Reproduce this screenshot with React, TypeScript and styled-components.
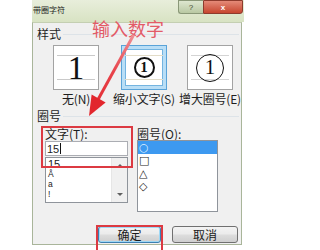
import React from "react";
import styled, { createGlobalStyle, css } from "styled-components";

const Global = createGlobalStyle`
  html, body { margin: 0; padding: 0; background: #ffffff; }
  body {
    width: 304px; height: 250px; overflow: hidden;
    font-family: "Noto Sans CJK SC", "Noto Sans", sans-serif;
  }
`;

const Stage = styled.div`
  position: relative;
  width: 304px;
  height: 250px;
  overflow: hidden;
  background: #ffffff;
`;

const Window = styled.div`
  margin-left: 32px;
  width: 212px;
  display: flex;
  flex-direction: column;
`;

const TitleBar = styled.div`
  height: 22px;
  background: linear-gradient(#e8eedb, #d8e3c3);
  display: flex;
  align-items: flex-start;
  justify-content: space-between;
  padding-left: 1px;
`;

const Title = styled.span`
  font-size: 8px;
  line-height: 8px;
  margin-top: 6px;
  color: #1d1d1d;
`;

const Caps = styled.div`
  display: flex;
  margin-right: 1px;
`;

const CapButton = styled.div<{ $close?: boolean }>`
  height: 14px;
  width: ${(p) => (p.$close ? 40 : 25)}px;
  box-sizing: border-box;
  display: flex;
  align-items: flex-end;
  justify-content: center;
  font-family: "Liberation Sans", sans-serif;
  font-size: 8px;
  line-height: 11px;
  ${(p) =>
    p.$close
      ? css`
          background: linear-gradient(#e48a78, #c7462f);
          border: 1px solid #8d3b2d;
          border-radius: 0 0 3px 0;
          color: #ffffff;
          font-weight: bold;
        `
      : css`
          background: linear-gradient(#dde6cf, #b9c8a3);
          border: 1px solid #8a9878;
          border-right: none;
          border-radius: 0 0 0 3px;
          color: #3c4a30;
        `}
`;

const Body = styled.div`
  height: 223px;
  box-sizing: border-box;
  margin-right: 2px;
  background: #f0f0f0;
  border: 1px solid #a9b59a;
  border-top-color: #c4cfb2;
  padding: 4px 0 0 4px;
  display: flex;
  flex-direction: column;
  font-size: 12px;
  color: #1e1e1e;
`;

const SectionHeader = styled.div<{ $top: number }>`
  display: flex;
  align-items: center;
  gap: 2px;
  height: 14px;
  line-height: 14px;
  margin-top: ${(p) => p.$top}px;
  margin-right: 2px;
  &::after {
    content: "";
    flex: 1;
    height: 1px;
    background: #dde3e8;
  }
`;

const StyleRow = styled.div`
  display: grid;
  grid-template-columns: 68px 68px 64px;
  margin-left: 5px;
  margin-top: 4px;
`;

const StyleCell = styled.div`
  display: flex;
  flex-direction: column;
  align-items: center;
`;

const StyleBox = styled.div<{ $selected?: boolean }>`
  width: 46px;
  height: 45px;
  box-sizing: border-box;
  background: #ffffff;
  display: flex;
  align-items: center;
  justify-content: center;
  border: 1px solid #a3a3a3;
  ${(p) =>
    p.$selected &&
    css`
      border-color: #5aa3d8;
      box-shadow: inset 0 0 0 3px #b9def6, inset 0 0 0 4px #74b4e0;
    `}
`;

const GuideBand = styled.div<{ $tone?: string }>`
  width: 38px;
  height: 25px;
  box-sizing: border-box;
  border-top: 1px solid ${(p) => p.$tone || "#c9c9c9"};
  border-bottom: 1px solid ${(p) => p.$tone || "#c9c9c9"};
  display: flex;
  align-items: center;
  justify-content: center;
  overflow: visible;
`;

const PlainOne = styled.span`
  font-family: "Liberation Serif", serif;
  font-size: 33px;
  line-height: 1;
  color: #111;
  margin-top: 1px;
`;

const Circled = styled.span<{ $size: number; $stroke: number; $font: number; $bold?: boolean }>`
  width: ${(p) => p.$size}px;
  height: ${(p) => p.$size}px;
  flex: none;
  box-sizing: border-box;
  border: ${(p) => p.$stroke}px solid #111;
  border-radius: 50%;
  display: flex;
  align-items: center;
  justify-content: center;
  font-family: "Liberation Serif", serif;
  font-size: ${(p) => p.$font}px;
  font-weight: ${(p) => (p.$bold ? 700 : 400)};
  line-height: 1;
  color: #111;
`;

const StyleLabel = styled.div`
  margin-top: 2px;
  line-height: 14px;
  white-space: nowrap;
  letter-spacing: -0.2px;
`;

const FieldsRow = styled.div`
  display: flex;
  gap: 9px;
  margin-top: 4px;
  margin-left: 8px;
`;

const Column = styled.div<{ $width: number; $marked?: boolean }>`
  width: ${(p) => p.$width}px;
  display: flex;
  flex-direction: column;
  position: relative;
  ${(p) =>
    p.$marked &&
    css`
      &::after {
        content: "";
        position: absolute;
        left: -4px;
        top: -1px;
        width: 92px;
        height: 42px;
        box-sizing: border-box;
        border: 2px solid #dc3a42;
        pointer-events: none;
      }
    `}
`;

const FieldLabel = styled.div`
  height: 13px;
  line-height: 13px;
  white-space: nowrap;
`;

const TextBox = styled.div`
  height: 15px;
  margin-top: 1px;
  box-sizing: border-box;
  background: #ffffff;
  border: 1px solid #abadb3;
  display: flex;
  align-items: center;
  padding-left: 1px;
  font-family: "Liberation Sans", sans-serif;
  font-size: 11px;
  line-height: 12px;
`;

const Caret = styled.span`
  width: 1px;
  height: 11px;
  background: #111;
  margin-left: 1px;
`;

const ListBox = styled.div<{ $height: number; $top?: number }>`
  height: ${(p) => p.$height}px;
  margin-top: ${(p) => p.$top ?? 0}px;
  box-sizing: border-box;
  background: #ffffff;
  border: 1px solid #8f949b;
  display: flex;
  overflow: hidden;
`;

const ListItems = styled.div`
  flex: 1;
  display: flex;
  flex-direction: column;
`;

const CharItem = styled.div`
  height: 10px;
  line-height: 9px;
  padding-left: 2px;
  font-family: "Liberation Sans", sans-serif;
  font-size: 8.5px;
  color: #1a1a1a;
  &:first-child {
    height: 12px;
    line-height: 12px;
    font-size: 11px;
  }
`;

const Scrollbar = styled.div`
  width: 15px;
  background: #f0f0f0;
  border-left: 1px solid #e6e6e6;
  display: flex;
  flex-direction: column;
  justify-content: space-between;
`;

const ScrollArrow = styled.div<{ $down?: boolean }>`
  height: 15px;
  display: flex;
  align-items: center;
  justify-content: center;
  &::before {
    content: "";
    width: 0;
    height: 0;
    border-left: 3px solid transparent;
    border-right: 3px solid transparent;
    ${(p) =>
      p.$down
        ? css`border-top: 3px solid #606060;`
        : css`border-bottom: 3px solid #606060;`}
  }
`;

const ShapeItem = styled.div<{ $selected?: boolean }>`
  height: 13px;
  line-height: 13px;
  padding-left: 1px;
  font-family: "DejaVu Sans", sans-serif;
  font-size: 11px;
  color: ${(p) => (p.$selected ? "#dff0ff" : "#1a1a1a")};
  background: ${(p) => (p.$selected ? "#3d99f0" : "transparent")};
`;

const ButtonRow = styled.div`
  display: flex;
  justify-content: flex-end;
  gap: 11px;
  margin-top: 14px;
  padding-right: 3px;
`;

const Marked = styled.div`
  position: relative;
  display: flex;
  &::after {
    content: "";
    position: absolute;
    left: -2px;
    top: -1px;
    width: 67px;
    height: 30px;
    box-sizing: border-box;
    border: 2px solid #dc3a42;
    pointer-events: none;
  }
`;

const PushButton = styled.div<{ $width: number; $default?: boolean }>`
  width: ${(p) => p.$width}px;
  height: 17px;
  box-sizing: border-box;
  border: 1px solid #707070;
  border-radius: 3px;
  background: linear-gradient(#f3f3f3 0%, #ebebeb 48%, #dddddd 52%, #cfcfcf 100%);
  display: flex;
  align-items: center;
  justify-content: center;
  font-size: 12px;
  line-height: 15px;
  color: #1a1a1a;
  ${(p) =>
    p.$default &&
    css`
      border-color: #3c7fb1;
      box-shadow: inset 0 0 0 1px #9fd8f5;
    `}
`;

const Note = styled.div`
  position: absolute;
  left: 92px;
  top: 16px;
  font-size: 18px;
  line-height: 24px;
  color: #e35b67;
  white-space: nowrap;
  pointer-events: none;
`;

const ArrowLayer = styled.svg`
  position: absolute;
  left: 0;
  top: 0;
  pointer-events: none;
`;

const styles = [
  { label: "无(N)", kind: "plain" },
  { label: "缩小文字(S)", kind: "small" },
  { label: "增大圈号(E)", kind: "big" },
];

const chars = ["15", "Å", "a", "!"];
const shapes = ["○", "□", "△", "◇"];

export default function App() {
  return (
    <Stage>
      <Global />
      <Window>
        <TitleBar>
          <Title>带圈字符</Title>
          <Caps>
            <CapButton>?</CapButton>
            <CapButton $close>x</CapButton>
          </Caps>
        </TitleBar>
        <Body>
          <SectionHeader $top={0}>样式</SectionHeader>
          <StyleRow>
            {styles.map((s) => (
              <StyleCell key={s.label}>
                <StyleBox $selected={s.kind === "small"}>
                  {s.kind === "plain" && (
                    <GuideBand>
                      <PlainOne>1</PlainOne>
                    </GuideBand>
                  )}
                  {s.kind === "small" && (
                    <GuideBand $tone="#e2dcc8">
                      <Circled $size={21} $stroke={2} $font={15} $bold>
                        1
                      </Circled>
                    </GuideBand>
                  )}
                  {s.kind === "big" && (
                    <GuideBand $tone="#d4d4d4">
                      <Circled $size={28} $stroke={1.5} $font={21}>
                        1
                      </Circled>
                    </GuideBand>
                  )}
                </StyleBox>
                <StyleLabel>{s.label}</StyleLabel>
              </StyleCell>
            ))}
          </StyleRow>
          <SectionHeader $top={3}>圈号</SectionHeader>
          <FieldsRow>
            <Column $width={83} $marked>
              <FieldLabel>文字(T):</FieldLabel>
              <TextBox>
                15
                <Caret />
              </TextBox>
              <ListBox $height={46} $top={1}>
                <ListItems>
                  {chars.map((c) => (
                    <CharItem key={c}>{c}</CharItem>
                  ))}
                </ListItems>
                <Scrollbar>
                  <ScrollArrow />
                  <ScrollArrow $down />
                </Scrollbar>
              </ListBox>
            </Column>
            <Column $width={81}>
              <FieldLabel>圈号(O):</FieldLabel>
              <ListBox $height={72}>
                <ListItems>
                  {shapes.map((s, i) => (
                    <ShapeItem key={s} $selected={i === 0}>
                      {s}
                    </ShapeItem>
                  ))}
                </ListItems>
              </ListBox>
            </Column>
          </FieldsRow>
          <ButtonRow>
            <Marked>
              <PushButton $width={63} $default>
                确定
              </PushButton>
            </Marked>
            <PushButton $width={66}>取消</PushButton>
          </ButtonRow>
        </Body>
      </Window>
      <Note>输入数字</Note>
      <ArrowLayer width={304} height={250} viewBox="0 0 304 250">
        <defs>
          <linearGradient id="arrowInk" gradientUnits="userSpaceOnUse" x1="133" y1="36" x2="89" y2="116">
            <stop offset="0" stopColor="#ef8c92" />
            <stop offset="0.45" stopColor="#e8434a" />
            <stop offset="1" stopColor="#e2262d" />
          </linearGradient>
        </defs>
        <line x1="133" y1="36" x2="98.6" y2="98.5" stroke="url(#arrowInk)" strokeWidth="3" strokeLinecap="round" />
        <polygon points="89,116 105.6,102.4 91.6,94.6" fill="#e2262d" />
      </ArrowLayer>
    </Stage>
  );
}
